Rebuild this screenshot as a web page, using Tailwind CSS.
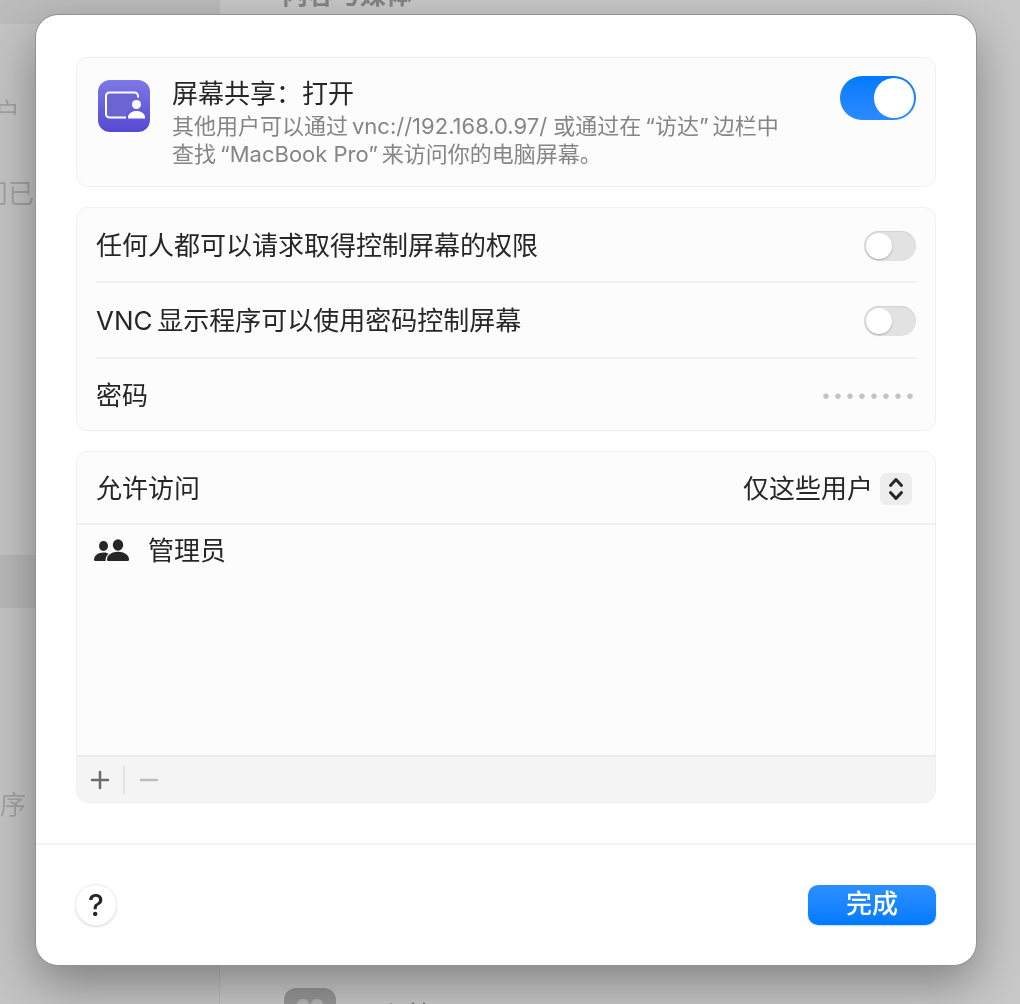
<!DOCTYPE html>
<html lang="zh-CN">
<head>
    <meta charset="UTF-8">
    <meta name="viewport" content="width=device-width, initial-scale=1.0">
    <title>屏幕共享</title>
    <script src="https://cdn.jsdelivr.net/npm/@tailwindcss/browser@4"></script>
</head>
<body class="min-h-screen bg-[#c8c8c8] font-['Inter','Noto_Sans_CJK_SC',sans-serif] text-[26px] leading-8 text-[#262626]">
    <!-- 后方变暗的设置窗口 -->
    <div class="fixed inset-0 flex overflow-hidden" aria-hidden="true">
        <div class="w-[220px] shrink-0 border-r border-[#bababa] bg-[#c4c4c4] text-[#a2a2a2]">
            <div class="h-6 bg-[#bcbcbc]"></div>
            <p class="mt-[73px] -ml-[6px]">户</p>
            <p class="mt-[49px] -ml-[18px]">问已</p>
            <div class="mt-[345px] h-[53px] bg-[#b8b8b8]"></div>
            <p class="mt-[181px]">序</p>
        </div>
        <div class="flex flex-1 flex-col justify-between pl-16">
            <p class="-mt-[21px] -ml-[2px] font-bold text-[#858585]">内容与媒体</p>
            <div class="-mb-9 flex items-center gap-5 text-[#6e6e6e]">
                <svg class="size-[52px]" viewBox="0 0 52 52">
                    <rect width="52" height="52" rx="12" fill="#969696"/>
                    <path d="M12 40V19q1-8 7-8t6 6v23zM40 40V19q-1-8-7-8t-6 6v23z" fill="#b5b5b5"/>
                </svg>
                <span class="pt-1">远程管理</span>
            </div>
        </div>
    </div>

    <!-- 弹窗 -->
    <div class="relative pt-[15px] pr-11 pb-[37px] pl-9">
        <main class="rounded-[22px] bg-white shadow-[0_0_0_1px_#929292,0_18px_50px_rgba(0,0,0,0.36)]">
            <div class="flex flex-col gap-5 px-10 pt-[42px] pb-10">
                <!-- 屏幕共享开关 -->
                <section class="flex items-start rounded-xl border border-[#f0f0f0] bg-[#fcfcfc] py-[18px] pr-[19px] pl-5">
                    <svg class="mt-[3px] size-[54px] shrink-0" viewBox="0 0 54 54">
                        <defs>
                            <linearGradient id="icon-bg" x1="0" y1="0" x2="0" y2="1">
                                <stop offset="0" stop-color="#7d78e6"/>
                                <stop offset="1" stop-color="#5549d2"/>
                            </linearGradient>
                        </defs>
                        <rect x="1" y="1" width="52" height="52" rx="12" fill="url(#icon-bg)"/>
                        <path d="M29 38H12.500a3.500 3.500 0 0 1-3.500-3.500V17a3.500 3.500 0 0 1 3.500-3.500h25a3.500 3.500 0 0 1 3.500 3.500v2.500L29 34z" fill="#6a65d0"/>
                        <path d="M29 38.500H12.500a3.500 3.500 0 0 1-3.500-3.500V17a3.500 3.500 0 0 1 3.500-3.500h25a3.500 3.500 0 0 1 3.500 3.500v1.500" fill="none" stroke="#fff" stroke-width="2"/>
                        <circle cx="39.500" cy="25.500" r="4.500" fill="#fff"/>
                        <path d="M31 39.500v-1c0-4 4-6.500 8.500-6.500s8.500 2.500 8.500 6.500v1z" fill="#fff"/>
                    </svg>
                    <div class="ml-[21px] flex-1 pt-[2px]">
                        <label for="sharing" class="block">屏幕共享：打开</label>
                        <p class="mt-[2px] text-[22px] leading-7 text-[#858585]">其他用户可以通过&thinsp;vnc://192.168.0.97/ 或通过在&thinsp;“访达”&thinsp;边栏中<br>查找&thinsp;“MacBook Pro”&thinsp;来访问你的电脑屏幕。</p>
                    </div>
                    <input type="checkbox" id="sharing" checked class="relative h-11 w-[76px] shrink-0 appearance-none rounded-full bg-[#cccccc] checked:bg-linear-to-b checked:from-[#007aff] checked:to-[#2b8aff] before:absolute before:top-[2px] before:left-[2px] before:size-10 before:rounded-full before:bg-white checked:before:left-[34px]">
                </section>

                <!-- 权限选项 -->
                <section class="rounded-xl border border-[#f0f0f0] bg-[#fcfcfc] px-[19px] pb-px">
                    <div class="flex h-[75px] items-center justify-between border-b-2 border-[#f1f1f1] pt-[2px]">
                        <label for="request">任何人都可以请求取得控制屏幕的权限</label>
                        <input type="checkbox" id="request" class="relative h-[30px] w-[52px] appearance-none rounded-full bg-[#e2e2e2] inset-shadow-[0_1px_1px_#d2d2d2] checked:bg-[#007aff] before:absolute before:top-[2px] before:left-[2px] before:size-[26px] before:rounded-full before:bg-white before:shadow-[0_1px_2px_#aaaaaa] checked:before:left-6">
                    </div>
                    <div class="flex h-[76px] items-center justify-between border-b-2 border-[#f1f1f1] pt-[2px]">
                        <label for="vnc">VNC&thinsp;显示程序可以使用密码控制屏幕</label>
                        <input type="checkbox" id="vnc" class="relative h-[30px] w-[52px] appearance-none rounded-full bg-[#e2e2e2] inset-shadow-[0_1px_1px_#d2d2d2] checked:bg-[#007aff] before:absolute before:top-[2px] before:left-[2px] before:size-[26px] before:rounded-full before:bg-white before:shadow-[0_1px_2px_#aaaaaa] checked:before:left-6">
                    </div>
                    <div class="flex h-[70px] items-center justify-between pt-1">
                        <label for="password">密码</label>
                        <input type="password" id="password" value="12345678" class="w-40 bg-transparent pt-1 text-right font-['Liberation_Mono',monospace] text-xl text-[#c4c4c4] outline-none">
                    </div>
                </section>

                <!-- 允许访问的用户 -->
                <section class="overflow-hidden rounded-xl border border-[#f0f0f0] bg-[#fcfcfc]">
                    <div class="flex h-[73px] items-center justify-between border-b-2 border-[#f0f0f0] pt-[2px] pr-[23px] pl-[19px]">
                        <label for="access">允许访问</label>
                        <div class="relative">
                            <select id="access" class="appearance-none bg-transparent pr-[38px] outline-none">
                                <option>仅这些用户</option>
                                <option>所有用户</option>
                            </select>
                            <svg class="pointer-events-none absolute top-0 right-0 size-8" viewBox="0 0 32 32" fill="none" stroke="#262626" stroke-width="3" stroke-linecap="round" stroke-linejoin="round">
                                <rect width="32" height="32" rx="7" fill="#ededed" stroke="none"/>
                                <path d="M10.500 12.500L16 6.500l5.500 6M10.500 19.500l5.500 6 5.500-6"/>
                            </svg>
                        </div>
                    </div>
                    <ul class="h-[230px]">
                        <li class="flex h-[52px] items-center gap-[19px] pl-[17px]">
                            <svg class="h-6 w-[35px]" viewBox="0 0 35 24" fill="#262626">
                                <ellipse cx="9.500" cy="7" rx="4.500" ry="5"/>
                                <path d="M0 20.800c0-4.500 4.500-7.300 9.500-7.300 2 0 3.600.4 5 1.200-2 1.800-3 4-3 7.300H2c-1.400 0-2-.4-2-1.200z"/>
                                <ellipse cx="24" cy="6" rx="5.200" ry="5.800"/>
                                <path d="M13 20.500c0-4.500 5-7.700 11-7.700s11 3.200 11 7.700c0 1-.6 1.500-2 1.500H15c-1.400 0-2-.5-2-1.500z"/>
                            </svg>
                            <span>管理员</span>
                        </li>
                    </ul>
                    <div class="flex h-[47px] items-center border-t-2 border-[#ebebeb] bg-[#f4f4f4]">
                        <button type="button" aria-label="添加" class="flex h-7 w-12 items-center justify-center border-r-2 border-[#e4e4e4]">
                            <svg class="size-5" viewBox="0 0 20 20" stroke="#6b6b6b" stroke-width="2.500" stroke-linecap="round"><path d="M2 10h16M10 2v16"/></svg>
                        </button>
                        <button type="button" aria-label="移除" class="flex h-7 w-12 items-center justify-center" disabled>
                            <svg class="size-5" viewBox="0 0 20 20" stroke="#bcbcbc" stroke-width="2.500" stroke-linecap="round"><path d="M2 10h16"/></svg>
                        </button>
                    </div>
                </section>
            </div>

            <!-- 底部按钮 -->
            <footer class="flex items-center justify-between border-t-2 border-[#f4f4f4] px-10 py-10">
                <button type="button" aria-label="帮助" class="flex size-10 items-center justify-center rounded-full bg-white text-[30px] font-medium shadow-[0_0_0_1px_#eeeeee,0_1px_3px_#bbbbbb]">?</button>
                <button type="button" class="h-10 w-32 rounded-[10px] bg-linear-to-b from-[#2b90ff] to-[#007aff] pb-[2px] font-medium text-white shadow-[0_1px_2px_#c8dcff]">完成</button>
            </footer>
        </main>
    </div>
</body>
</html>
